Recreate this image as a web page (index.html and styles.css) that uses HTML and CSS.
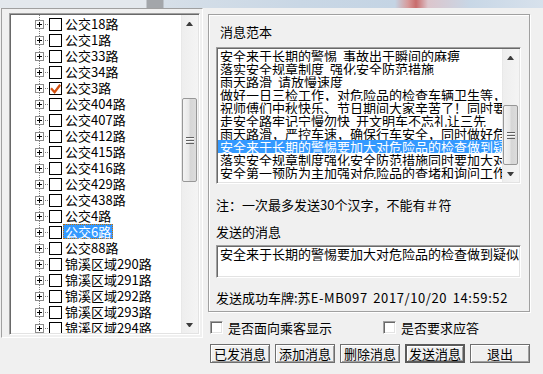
FILE: index.html
```html
<!DOCTYPE html>
<html>
<head>
<meta charset="utf-8">
<link rel="stylesheet" href="styles.css">
</head>
<body>
<div class="desk"></div>
<div class="win">
  <div class="left">
    <div class="tree">
      <div class="tree-body">
        <div class="row"><span class="twig"><span class="exp"></span></span><span class="cb"></span><span class="lbl">公交18路</span></div>
        <div class="row"><span class="twig"><span class="exp"></span></span><span class="cb"></span><span class="lbl">公交1路</span></div>
        <div class="row"><span class="twig"><span class="exp"></span></span><span class="cb"></span><span class="lbl">公交33路</span></div>
        <div class="row"><span class="twig"><span class="exp"></span></span><span class="cb"></span><span class="lbl">公交34路</span></div>
        <div class="row"><span class="twig"><span class="exp"></span></span><span class="cb"><svg class="tick" width="11" height="11" viewBox="0 0 11 11"><path d="M1 5.3 L4.6 9.2 L10.2 1.8" /></svg></span><span class="lbl">公交3路</span></div>
        <div class="row"><span class="twig"><span class="exp"></span></span><span class="cb"></span><span class="lbl">公交404路</span></div>
        <div class="row"><span class="twig"><span class="exp"></span></span><span class="cb"></span><span class="lbl">公交407路</span></div>
        <div class="row"><span class="twig"><span class="exp"></span></span><span class="cb"></span><span class="lbl">公交412路</span></div>
        <div class="row"><span class="twig"><span class="exp"></span></span><span class="cb"></span><span class="lbl">公交415路</span></div>
        <div class="row"><span class="twig"><span class="exp"></span></span><span class="cb"></span><span class="lbl">公交416路</span></div>
        <div class="row"><span class="twig"><span class="exp"></span></span><span class="cb"></span><span class="lbl">公交429路</span></div>
        <div class="row"><span class="twig"><span class="exp"></span></span><span class="cb"></span><span class="lbl">公交438路</span></div>
        <div class="row"><span class="twig"><span class="exp"></span></span><span class="cb"></span><span class="lbl">公交4路</span></div>
        <div class="row"><span class="twig"><span class="exp"></span></span><span class="cb"></span><span class="lbl sel">公交6路</span></div>
        <div class="row"><span class="twig"><span class="exp"></span></span><span class="cb"></span><span class="lbl">公交88路</span></div>
        <div class="row"><span class="twig"><span class="exp"></span></span><span class="cb"></span><span class="lbl">锦溪区域290路</span></div>
        <div class="row"><span class="twig"><span class="exp"></span></span><span class="cb"></span><span class="lbl">锦溪区域291路</span></div>
        <div class="row"><span class="twig"><span class="exp"></span></span><span class="cb"></span><span class="lbl">锦溪区域292路</span></div>
        <div class="row"><span class="twig"><span class="exp"></span></span><span class="cb"></span><span class="lbl">锦溪区域293路</span></div>
        <div class="row"><span class="twig"><span class="exp"></span></span><span class="cb"></span><span class="lbl">锦溪区域294路</span></div>
      </div>
      <div class="sb sb-tree">
        <div class="arr"><span class="tri-up"></span></div>
        <div class="thumb"><span class="grip"></span></div>
        <div class="fill"></div>
        <div class="arr"><span class="tri-down"></span></div>
      </div>
    </div>
  </div>

  <div class="right">
    <div class="group">
      <div class="cap">消息范本</div>
      <div class="list">
        <div class="list-body">
          <div class="li">安全来于长期的警惕 事故出于瞬间的麻痹</div>
          <div class="li">落实安全规章制度 强化安全防范措施</div>
          <div class="li">雨天路滑 请放慢速度</div>
          <div class="li">做好一日三检工作，对危险品的检查车辆卫生等，</div>
          <div class="li">祝师傅们中秋快乐、节日期间大家辛苦了！同时要注意行车安全</div>
          <div class="li">走安全路牢记宁慢勿快 开文明车不忘礼让三先</div>
          <div class="li">雨天路滑，严控车速，确保行车安全，同时做好危险品检查</div>
          <div class="li sel">安全来于长期的警惕要加大对危险品的检查做到疑似</div>
          <div class="li">落实安全规章制度强化安全防范措施同时要加大对危险品的检查</div>
          <div class="li">安全第一预防为主加强对危险品的查堵和询问工作</div>
        </div>
        <div class="sb sb-list">
          <div class="arr"><span class="tri-up"></span></div>
          <div class="thumb"><span class="grip"></span></div>
          <div class="fill"></div>
          <div class="arr"><span class="tri-down"></span></div>
        </div>
      </div>
      <div class="note">注：一次最多发送30个汉字，不能有＃符</div>
      <div class="cap2">发送的消息</div>
      <div class="edit">安全来于长期的警惕要加大对危险品的检查做到疑似</div>
      <div class="status">发送成功车牌:苏<span class="mono">E-MB097 2017/10/20 14:59:52</span></div>
    </div>

    <div class="checks">
      <label class="chk chk-first"><span class="box"></span>是否面向乘客显示</label>
      <label class="chk"><span class="box"></span>是否要求应答</label>
    </div>

    <div class="btns">
      <button class="btn">已发消息</button>
      <button class="btn">添加消息</button>
      <button class="btn">删除消息</button>
      <button class="btn def">发送消息</button>
      <button class="btn">退出</button>
    </div>
  </div>
</div>
</body>
</html>
```

FILE: styles.css
```css
html, body {
  margin: 0;
  padding: 0;
}
body {
  width: 543px;
  height: 374px;
  overflow: hidden;
  background: #f0f0f0;
  color: #000;
  font-family: "Noto Sans CJK SC", "Noto Sans CJK JP", sans-serif;
  font-size: 13px;
  line-height: 16px;
}

/* desktop strip above the window */
.desk {
  height: 8px;
  background: linear-gradient(to right,
    #e3e8ed 0, #e3e8ed 146px,
    #a3a6aa 147px, #a3a6aa 163px,
    #d6dfe8 164px, #c9d7e5 300px,
    #c4d4e4 395px, #d79a9a 408px, #c96c6c 416px,
    #dcc5cc 428px, #c8d7e6 470px, #d7e1ec 543px);
}

.win {
  display: flex;
  align-items: flex-start;
}

/* ---------- left panel ---------- */
.left {
  box-sizing: border-box;
  width: 202px;
  height: 330px;
  margin-left: 1px;
  border-top: 1px solid #a0a0a0;
  border-left: 1px solid #a0a0a0;
  border-right: 1px solid #fff;
  border-bottom: 1px solid #fff;
  padding: 4px 0 0 7px;
}

.tree {
  box-sizing: border-box;
  display: flex;
  width: 191px;
  height: 322px;
  border: 1px solid;
  border-color: #a0a0a0 #fff #fff #a0a0a0;
  padding: 1px;
  box-shadow: inset 1px 1px #696969, inset -1px -1px #e3e3e3;
  background: #fff;
}
.tree-body {
  flex: 1;
  overflow: hidden;
}
.row {
  display: flex;
  align-items: flex-start;
  height: 16px;
  white-space: nowrap;
}
.twig {
  flex: none;
  display: flex;
  align-items: flex-start;
  width: 14px;
  height: 16px;
  margin-left: 24px;
  background:
    repeating-linear-gradient(to bottom, #808080 0 1px, transparent 1px 2px) 4px 0 / 1px 16px no-repeat,
    repeating-linear-gradient(to right, #808080 0 1px, transparent 1px 2px) 10px 9px / 4px 1px no-repeat;
}
.exp {
  box-sizing: border-box;
  width: 9px;
  height: 9px;
  margin-top: 5px;
  border: 1px solid #8c8c8c;
  background:
    linear-gradient(#000, #000) center / 5px 1px no-repeat,
    linear-gradient(#000, #000) center / 1px 5px no-repeat,
    #fff;
}
.cb {
  flex: none;
  box-sizing: border-box;
  width: 13px;
  height: 13px;
  margin-top: 3px;
  border: 1px solid #000;
  background: #fff;
  display: flex;
}
.tick path {
  fill: none;
  stroke: #d4500f;
  stroke-width: 2.3;
}
.lbl {
  margin-left: 1px;
  margin-top: 1px;
  padding: 0 2px;
  height: 15px;
  line-height: 15px;
}
.lbl.sel {
  box-sizing: border-box;
  padding: 0 1px;
  background: #3399ff;
  color: #fff;
  border: 1px dotted #c87000;
  line-height: 13px;
}

/* ---------- scrollbars ---------- */
.sb {
  flex: none;
  width: 17px;
  display: flex;
  flex-direction: column;
  background: linear-gradient(to right, #e3e3e3 0, #eeeeee 1px, #f4f4f4 100%);
}
.arr {
  height: 17px;
  flex: none;
  display: flex;
  align-items: center;
  justify-content: center;
}
.tri-up {
  width: 1px;
  height: 0;
  border-left: 3px solid transparent;
  border-right: 3px solid transparent;
  border-bottom: 4px solid #3c3c3c;
}
.tri-down {
  width: 1px;
  height: 0;
  border-left: 3px solid transparent;
  border-right: 3px solid transparent;
  border-top: 4px solid #3c3c3c;
}
.thumb {
  flex: none;
  box-sizing: border-box;
  margin: 0 1px;
  border: 1px solid #979797;
  border-radius: 2px;
  background: linear-gradient(to right, #f3f3f3 0, #e8e8e8 45%, #d6d6d6 55%, #dcdcdc 100%);
  display: flex;
  align-items: center;
  justify-content: center;
}
.grip {
  width: 8px;
  height: 7px;
  background: repeating-linear-gradient(to bottom, #606060 0 1px, #f8f8f8 1px 2px, transparent 2px 3px);
}
.fill {
  flex: 1;
}
.sb-tree .thumb {
  margin-top: 66px;
  height: 84px;
}
.sb-list .thumb {
  margin-top: 39px;
  height: 60px;
}

/* ---------- right panel ---------- */
.right {
  margin-left: 5px;
  margin-top: 6px;
  width: 322px;
}
.group {
  box-sizing: border-box;
  width: 322px;
  height: 298px;
  border: 1px solid #a0a0a0;
  box-shadow: inset 1px 1px #fff, 1px 1px 0 #fff;
  padding: 9px 7px 0 7px;
}
.cap {
  padding-left: 4px;
  height: 16px;
}
.list {
  box-sizing: border-box;
  display: flex;
  width: 305px;
  height: 137px;
  margin-top: 7px;
  border: 1px solid;
  border-color: #a0a0a0 #fff #fff #a0a0a0;
  padding: 1px;
  box-shadow: inset 1px 1px #696969, inset -1px -1px #e3e3e3;
  background: #fff;
}
.list-body {
  flex: 1;
  min-width: 0;
  overflow: hidden;
}
.li {
  height: 13px;
  line-height: 13px;
  padding-left: 2px;
  white-space: pre;
  overflow: hidden;
  word-spacing: 3px;
}
.li.sel {
  background: #3399ff;
  color: #fff;
}
.note {
  margin-top: 13px;
  height: 16px;
  white-space: nowrap;
}
.cap2 {
  margin-top: 11px;
  height: 16px;
}
.edit {
  box-sizing: border-box;
  width: 305px;
  height: 33px;
  margin-top: 5px;
  border: 1px solid;
  border-color: #a0a0a0 #fff #fff #a0a0a0;
  padding: 1px 1px 1px 3px;
  box-shadow: inset 1px 1px #696969, inset -1px -1px #e3e3e3;
  background: #fff;
  line-height: 13px;
  white-space: nowrap;
  overflow: hidden;
}
.status {
  margin-top: 12px;
  height: 16px;
  white-space: pre;
}
.status .mono {
  letter-spacing: 0.6px;
  word-spacing: 2px;
}

.checks {
  display: flex;
  margin-top: 8px;
  padding-left: 2px;
  height: 16px;
}
.chk {
  display: flex;
  align-items: flex-start;
  gap: 5px;
  white-space: nowrap;
}
.chk-first {
  width: 173px;
}
.box {
  box-sizing: border-box;
  width: 13px;
  height: 13px;
  margin-top: 1px;
  border: 1px solid;
  border-color: #a0a0a0 #fff #fff #a0a0a0;
  box-shadow: inset 1px 1px #696969, inset -1px -1px #e3e3e3;
  background: #fff;
}

.btns {
  display: flex;
  gap: 5px;
  margin-top: 8px;
  padding-left: 2px;
}
.btn {
  box-sizing: border-box;
  width: 60px;
  height: 19px;
  margin: 0;
  padding: 0;
  font: inherit;
  line-height: 15px;
  color: #000;
  background: #f0f0f0;
  border: 1px solid #6e6e6e;
  box-shadow: inset 1px 1px #fff, inset -1px -1px #a0a0a0;
}
.btn.def {
  border: 2px solid #5a5a5a;
  box-shadow: inset 1px 1px #fff, inset -1px -1px #a0a0a0;
  line-height: 13px;
}
```
